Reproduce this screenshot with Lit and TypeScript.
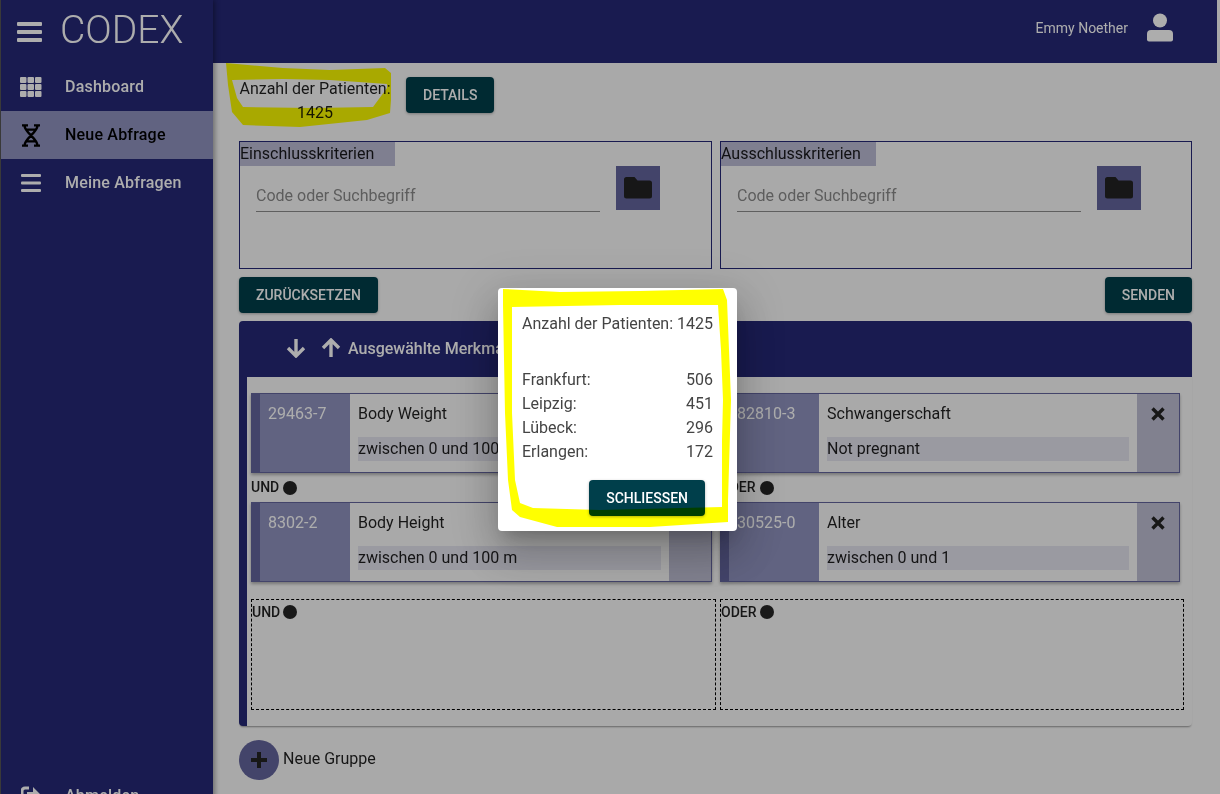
import { LitElement, html, css, svg } from "lit";
import { customElement } from "lit/decorators.js";

const arrowDown = html`<svg class="arrow" viewBox="0 0 20 20"><path d="M10 1v17M2 10l8 8 8-8" fill="none" stroke="currentColor" stroke-width="3.4"/></svg>`;
const arrowUp = html`<svg class="arrow" viewBox="0 0 20 20"><path d="M10 19V2M2 10l8-8 8 8" fill="none" stroke="currentColor" stroke-width="3.4"/></svg>`;
const closeX = html`<svg class="x" viewBox="0 0 14 14"><path d="M1.5 1.5l11 11M12.5 1.5l-11 11" fill="none" stroke="currentColor" stroke-width="3.4"/></svg>`;
const folder = html`<svg class="folder" viewBox="0 0 28 22"><path d="M2.5 0h8l3 3.5h12a2.5 2.5 0 0 1 2.5 2.5v13a2.5 2.5 0 0 1-2.5 2.5h-23A2.5 2.5 0 0 1 0 19V2.5A2.5 2.5 0 0 1 2.5 0z" fill="currentColor"/></svg>`;
const burger = (w: number, h: number, t: number) => html`<svg width=${w} height=${h} viewBox="0 0 ${w} ${h}"><rect y="0" width=${w} height=${t} rx="1" fill="currentColor"/><rect y=${(h - t) / 2} width=${w} height=${t} rx="1" fill="currentColor"/><rect y=${h - t} width=${w} height=${t} rx="1" fill="currentColor"/></svg>`;
const grid = html`<svg width="22" height="20" viewBox="0 0 22 20">${[0, 7.5, 15].flatMap((x) => [0, 7, 14].map((y) => svg`<rect x=${x} y=${y} width="6.5" height="6" rx="1" fill="currentColor"/>`))}</svg>`;
const dna = html`<svg width="20" height="23" viewBox="0 0 20 23"><path d="M1 1.4h6M13 1.4h6M1 21.6h6M13 21.6h6M3.5 1.4c0 7 13 13 13 20.2M16.5 1.4c0 7-13 13-13 20.2M5.5 5.6h9M5.5 17.4h9" fill="none" stroke="currentColor" stroke-width="2.4"/></svg>`;
const signOut = html`<svg width="20" height="20" viewBox="0 0 20 20"><path d="M8 2H4a3 3 0 0 0-3 3v10a3 3 0 0 0 3 3h4" fill="none" stroke="currentColor" stroke-width="3"/><path d="M12 1l8 8-8 8v-5H6V6h6z" fill="currentColor"/></svg>`;

interface Crit { code: string; name: string; value: string }
const left: Crit[] = [
  { code: "29463-7", name: "Body Weight", value: "zwischen 0 und 100 kg" },
  { code: "8302-2", name: "Body Height", value: "zwischen 0 und 100 m" },
];
const right: Crit[] = [
  { code: "82810-3", name: "Schwangerschaft", value: "Not pregnant" },
  { code: "30525-0", name: "Alter", value: "zwischen 0 und 1" },
];
const sites = [["Frankfurt:", "506"], ["Leipzig:", "451"], ["Lübeck:", "296"], ["Erlangen:", "172"]];

@customElement("app-root")
export class AppRoot extends LitElement {
  static styles = css`
    :host { display: block; width: 1220px; height: 794px; overflow: hidden; position: relative;
      font-family: Roboto, "Noto Sans", sans-serif; font-size: 16px; color: rgba(0,0,0,.87); background: #fafafa; }
    * { box-sizing: border-box; }
    .shell { display: flex; align-items: flex-start; height: 794px; }
    .side { width: 213px; flex: none; height: 820px; background: #252876; color: #fff;
      display: flex; flex-direction: column; border-left: 1px solid #555; box-shadow: 2px 0 5px rgba(0,0,0,.35); position: relative; z-index: 1; }
    .brand { height: 63px; display: flex; align-items: center; padding-left: 16px; gap: 18px; }
    .logo { font-weight: 300; font-size: 39px; line-height: 61px; height: 63px; }
    .item { height: 48px; display: flex; align-items: center; font-weight: 500; line-height: 24px; letter-spacing: .2px; }
    .item.active { background: #8f92be; color: #000; }
    .item .ic { width: 64px; padding-left: 19px; display: flex; flex: none; }
    .item .ic.c { padding-left: 20px; }
    .spacer { flex: 1; }
    .main { flex: 1; min-width: 0; }
    .top { height: 63px; margin-right: 3px; background: #252876; color: #fff; display: flex; align-items: center; justify-content: flex-end; font-size: 14px; padding: 0 44px 7px 0; }
    .top .user { margin-right: 19px; }
    .top svg { margin-top: -2px; }
    .content { padding: 14px 28px 0 26px; }
    .count-row { display: flex; align-items: flex-start; gap: 15px; height: 64px; }
    .count { width: 152px; text-align: center; line-height: 24px; }
    .btn { display: inline-flex; align-items: center; justify-content: center; height: 36px; padding: 0 17px; background: #003f4b; color: #fff; border-radius: 4px;
      font-size: 14px; font-weight: 500; box-shadow: 0 1px 3px rgba(0,0,0,.3); }
    .filters { display: grid; grid-template-columns: 473px 472px; gap: 8px; }
    .filter { height: 128px; border: 1px solid #252876; }
    .filter .lab { width: 155px; height: 24px; line-height: 24px; background: #bcbcd4; }
    .filter .row { display: flex; padding: 0 0 0 16px; align-items: flex-start; }
    .field { width: 344px; height: 46px; border-bottom: 1px solid #8c8c8c; color: #8a8a8a; line-height: 24px; padding-top: 18px; }
    .fbtn { width: 44px; height: 44px; margin-left: 16px; background: #64659c; color: #222; display: flex; align-items: center; justify-content: center; }
    .folder { width: 28px; height: 22px; }
    .actions { display: flex; justify-content: space-between; margin: 8px 0; }
    .panel { height: 405px; border-radius: 4px; background: #fafafa; box-shadow: 0 2px 2px -1px rgba(0,0,0,.4); border-left: 8px solid #252876; overflow: hidden; }
    .phead { height: 56px; margin-left: -8px; background: #252876; color: #fff; display: flex; align-items: center; font-weight: 500; padding: 0 0 2px 47px; gap: 15px; }
    .phead .title { margin-left: -8px; }
    .arrow { width: 20px; height: 20px; }
    .groups { display: grid; grid-template-columns: 465px 464px; gap: 4px; padding: 16px 8px 0 4px; }
    .card { height: 80px; margin-right: 4px; display: flex; border: 1px solid #64659c; border-left: 9px solid #64659c; box-shadow: 0 2px 3px rgba(0,0,0,.3); }
    .code { width: 90px; flex: none; background: #8f92be; color: #fff; padding: 8px; line-height: 24px; }
    .body { flex: 1; min-width: 0; padding: 8px 8px 0; background: #fafafa; line-height: 24px; }
    .val { margin-top: 11px; height: 24px; background: #e4e3ee; white-space: nowrap; overflow: hidden; }
    .del { width: 42px; flex: none; background: #bfbfd3; color: #222; display: flex; justify-content: center; padding-top: 13px; }
    .x { width: 14px; height: 14px; }
    .op { height: 29px; display: flex; align-items: center; gap: 4px; font-size: 14px; font-weight: 500; line-height: 29px; }
    .dot { width: 14px; height: 14px; border-radius: 50%; background: #262626; }
    .drop { height: 111px; border: 1px dashed #000; margin-top: 13px; }
    .drop .op { height: 24px; align-items: flex-start; line-height: 24px; gap: 3px; }
    .drop .dot { margin-top: 5px; }
    .new { display: flex; align-items: center; gap: 4px; margin-top: 14px; }
    .new span { padding-bottom: 3px; }
    .fab { width: 40px; height: 40px; border-radius: 50%; background: #64659c; display: flex; align-items: center; justify-content: center; color: #222; }
    .overlay { position: absolute; inset: 0; background: rgba(0,0,0,.32); z-index: 2; }
    .dialog { position: absolute; left: 498px; top: 288px; width: 239px; height: 243px; background: #fff; border-radius: 4px; padding: 24px; z-index: 3; color: #444;
      box-shadow: 0 11px 15px -7px rgba(0,0,0,.2), 0 24px 38px 3px rgba(0,0,0,.14), 0 9px 46px 8px rgba(0,0,0,.12); line-height: 24px; }
    .dialog .total { height: 56px; white-space: nowrap; }
    .dialog .site { display: flex; justify-content: space-between; }
    .dialog .foot { display: flex; justify-content: flex-end; margin: 16px -8px 0 0; padding-right: 16px; }
    .scrib { position: absolute; left: 0; top: 0; width: 1220px; height: 794px; z-index: 4; mix-blend-mode: multiply; pointer-events: none; }
  `;

  private crit(c: Crit) {
    return html`<div class="card">
      <div class="code">${c.code}</div>
      <div class="body"><div>${c.name}</div><div class="val">${c.value}</div></div>
      <div class="del">${closeX}</div>
    </div>`;
  }

  private column(list: Crit[], op: string) {
    return html`<div>${this.crit(list[0])}<div class="op">${op} <span class="dot"></span></div>${this.crit(list[1])}</div>`;
  }

  private filter(label: string) {
    return html`<div class="filter">
      <div class="lab">${label}</div>
      <div class="row"><div class="field">Code oder Suchbegriff</div><div class="fbtn">${folder}</div></div>
    </div>`;
  }

  render() {
    return html`
      <div class="shell">
        <aside class="side">
          <div class="brand">${burger(25, 20, 4)}<span class="logo">CODEX</span></div>
          <div class="item"><span class="ic">${grid}</span>Dashboard</div>
          <div class="item active"><span class="ic c">${dna}</span>Neue Abfrage</div>
          <div class="item"><span class="ic c">${burger(20, 18, 3)}</span>Meine Abfragen</div>
          <div class="spacer"></div>
          <div class="item"><span class="ic c">${signOut}</span>Abmelden</div>
        </aside>
        <div class="main">
          <header class="top">
            <span class="user">Emmy Noether</span>
            <svg width="26" height="29" viewBox="0 0 26 29"><circle cx="13" cy="7.5" r="7" fill="currentColor"/><path d="M4 17h18a4 4 0 0 1 4 4v5.5a2 2 0 0 1-2 2H2a2 2 0 0 1-2-2V21a4 4 0 0 1 4-4z" fill="currentColor"/></svg>
          </header>
          <div class="content">
            <div class="count-row">
              <div class="count">Anzahl der Patienten:<br />1425</div>
              <span class="btn">DETAILS</span>
            </div>
            <div class="filters">${this.filter("Einschlusskriterien")}${this.filter("Ausschlusskriterien")}</div>
            <div class="actions"><span class="btn">ZURÜCKSETZEN</span><span class="btn">SENDEN</span></div>
            <section class="panel">
              <div class="phead">${arrowDown}${arrowUp}<span class="title">Ausgewählte Merkmale</span></div>
              <div class="groups">
                ${this.column(left, "UND")}${this.column(right, "ODER")}
                <div class="drop"><div class="op">UND <span class="dot"></span></div></div>
                <div class="drop"><div class="op">ODER <span class="dot"></span></div></div>
              </div>
            </section>
            <div class="new">
              <div class="fab"><svg width="18" height="18" viewBox="0 0 18 18"><path d="M9 1v16M1 9h16" stroke="currentColor" stroke-width="4"/></svg></div>
              <span>Neue Gruppe</span>
            </div>
          </div>
        </div>
      </div>
      <div class="overlay"></div>
      <div class="dialog">
        <div class="total">Anzahl der Patienten: 1425</div>
        ${sites.map(([n, v]) => html`<div class="site"><span>${n}</span><span>${v}</span></div>`)}
        <div class="foot"><span class="btn">SCHLIESSEN</span></div>
      </div>
      <svg class="scrib" viewBox="0 0 1220 794">
        <path fill-rule="evenodd" fill="#ffff00" d="M503 289 L560 292 L640 291 L723 289 L727 300 L731 400 L728 500 L728 522 L650 527 L557 527 L520 517 L512 510 L508 480 L505 413 L503 305 Z M512 307 L512 413 L515 480 L520 503 L533 508 L600 510 L722 507 L722 440 L723 400 L721 350 L718 305 L620 305 Z"/>
        <path fill-rule="evenodd" fill="#ffff00" d="M226 63 L283 68 L330 70 L385 68 L391 73 L391 100 L390 113 L367 120 L300 127 L243 125 L232 112 L228 85 Z M232 80 L237 98 L243 107 L313 108 L373 107 L387 88 L387 84 L330 80 L283 79 Z"/>
      </svg>
    `;
  }
}
